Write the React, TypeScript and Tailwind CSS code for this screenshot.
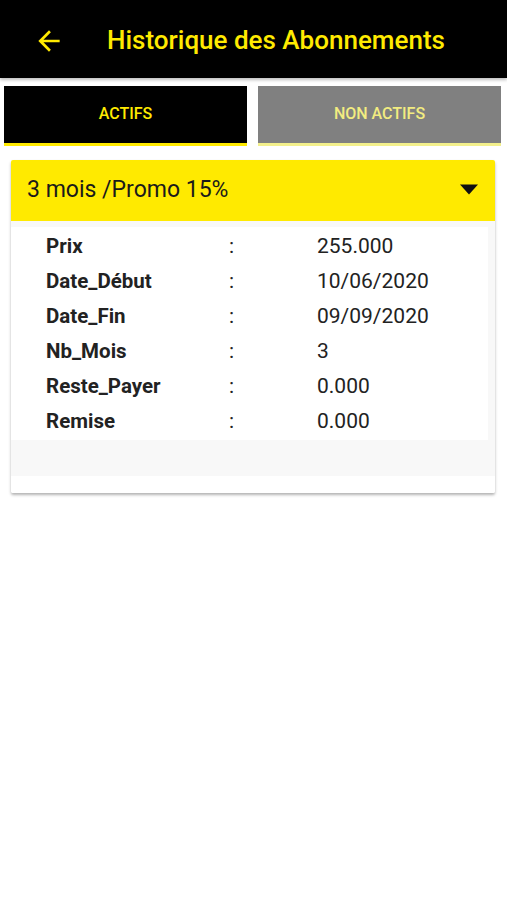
import React from "react";

const rows: [string, string][] = [
  ["Prix", "255.000"],
  ["Date_Début", "10/06/2020"],
  ["Date_Fin", "09/09/2020"],
  ["Nb_Mois", "3"],
  ["Reste_Payer", "0.000"],
  ["Remise", "0.000"],
];

export default function App() {
  return (
    <div
      className="w-[507px] h-[900px] bg-white overflow-hidden"
      style={{ fontFamily: "Roboto, 'Noto Sans', sans-serif" }}
    >
      <div className="h-[78px] bg-black flex items-center shadow-[0_2px_3px_rgba(0,0,0,0.25)] relative">
        <svg
          className="ml-[33px] mt-[3px]"
          width="32"
          height="32"
          viewBox="0 0 24 24"
          fill="#ffea00"
        >
          <path d="M20 11H7.83l5.59-5.59L12 4l-8 8 8 8 1.41-1.41L7.83 13H20v-2z" />
        </svg>
        <div className="ml-[42px] text-[26px] font-medium text-[#ffea00] leading-none mt-[2px]">
          Historique des Abonnements
        </div>
      </div>

      <div className="flex gap-[11px] pl-[4px] pr-[6px] mt-[8px]">
        <div className="flex-1 h-[60px] bg-black border-b-[3px] border-[#ffea00] flex items-center justify-center">
          <span className="text-[16px] font-medium text-[#ffea00] mt-[-2px]">ACTIFS</span>
        </div>
        <div className="flex-1 h-[60px] bg-[#808080] border-b-[3px] border-[#f3f08c] flex items-center justify-center">
          <span className="text-[16px] font-medium text-[#f2ec80] mt-[-2px]">NON ACTIFS</span>
        </div>
      </div>

      <div className="ml-[11px] mr-[12px] mt-[14px] bg-white rounded-[2px] shadow-[0_2px_3px_rgba(0,0,0,0.3)] overflow-hidden">
        <div className="h-[61px] bg-[#ffea00] flex items-center justify-between pl-[16px] pr-[16px]">
          <span className="text-[23px] text-[#1a1a1a]">3 mois /Promo 15%</span>
          <svg width="20" height="11" viewBox="0 0 20 11" className="mt-[-2px]">
            <path d="M1 0.5 L19 0.5 L10 10.5 Z" fill="#111" />
          </svg>
        </div>
        <div className="bg-[#f8f8f8] pt-[6px] pr-[7px] pb-[36px]">
          <div className="bg-white pt-[2px] pb-[1px]">
            {rows.map(([k, v]) => (
              <div key={k} className="h-[35px] flex items-center text-[21px] text-[#222]">
                <span className="w-[218px] pl-[35px] text-[20.5px] font-bold shrink-0">{k}</span>
                <span className="w-[88px] shrink-0">:</span>
                <span>{v}</span>
              </div>
            ))}
          </div>
        </div>
        <div className="h-[17px] bg-white" />
      </div>
    </div>
  );
}
